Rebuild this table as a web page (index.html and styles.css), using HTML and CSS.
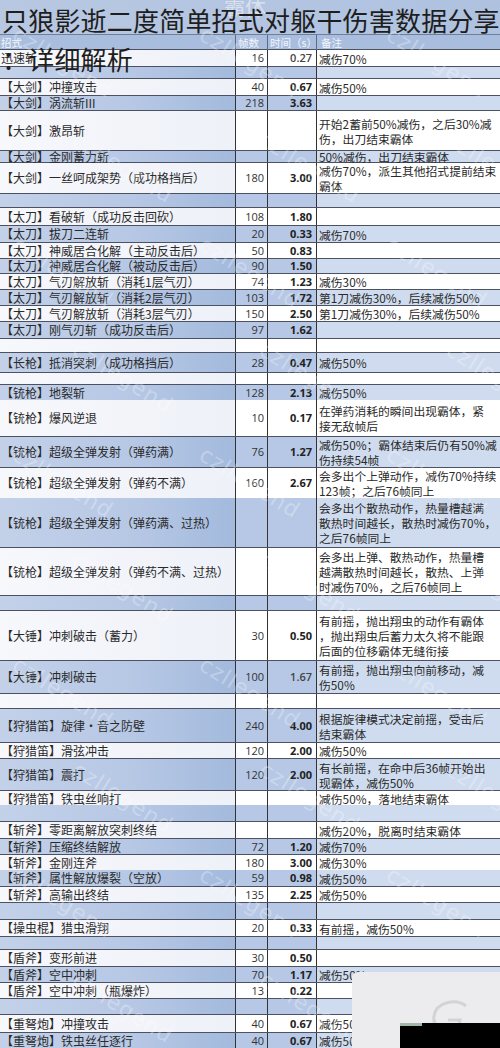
FILE: index.html
```html
<!DOCTYPE html>
<html lang="zh-CN">
<head>
<meta charset="utf-8">
<title>只狼影逝二度简单招式对躯干伤害数据分享：详细解析</title>
<link rel="stylesheet" href="styles.css">
</head>
<body>
<div class="page">
  <div class="sheet">
    <div class="row b h35 top"><div class="faint">霸体</div></div>
    <div class="row hdr h15"><div class="c1">招式</div><div class="c2">帧数</div><div class="c3">时间（s）</div><div class="c4">备注</div></div>
    <div class="row w h17"><div class="c1">迅速斩</div><div class="c2">16</div><div class="c3 thin">0.27</div><div class="c4">减伤70%</div></div>
    <div class="row b h12"><div class="c1"></div><div class="c2"></div><div class="c3"></div><div class="c4"></div></div>
    <div class="row w h17"><div class="c1">【大剑】冲撞攻击</div><div class="c2">40</div><div class="c3">0.67</div><div class="c4">减伤50%</div></div>
    <div class="row b h15"><div class="c1">【大剑】涡流斩III</div><div class="c2">218</div><div class="c3">3.63</div><div class="c4"></div></div>
    <div class="row w h40"><div class="c1">【大剑】激昂斩</div><div class="c2"></div><div class="c3"></div><div class="c4">开始2蓄前50%减伤，之后30%减<br>伤，出刀结束霸体</div></div>
    <div class="row b h12 tight"><div class="c1">【大剑】金刚蓄力斩</div><div class="c2"></div><div class="c3"></div><div class="c4">50%减伤，出刀结束霸体</div></div>
    <div class="row w h31"><div class="c1">【大剑】一丝呵成架势（成功格挡后）</div><div class="c2">180</div><div class="c3">3.00</div><div class="c4">减伤70%，派生其他招式提前结束<br>霸体</div></div>
    <div class="row b h14"><div class="c1"></div><div class="c2"></div><div class="c3"></div><div class="c4"></div></div>
    <div class="row w h18"><div class="c1">【太刀】看破斩（成功反击回砍）</div><div class="c2">108</div><div class="c3">1.80</div><div class="c4"></div></div>
    <div class="row b h17"><div class="c1">【太刀】拔刀二连斩</div><div class="c2">20</div><div class="c3">0.33</div><div class="c4">减伤70%</div></div>
    <div class="row w h16"><div class="c1">【太刀】神威居合化解（主动反击后）</div><div class="c2">50</div><div class="c3">0.83</div><div class="c4"></div></div>
    <div class="row b h15"><div class="c1">【太刀】神威居合化解（被动反击后）</div><div class="c2">90</div><div class="c3">1.50</div><div class="c4"></div></div>
    <div class="row w h16"><div class="c1">【太刀】气刃解放斩（消耗1层气刃）</div><div class="c2">74</div><div class="c3">1.23</div><div class="c4">减伤30%</div></div>
    <div class="row b h16"><div class="c1">【太刀】气刃解放斩（消耗2层气刃）</div><div class="c2">103</div><div class="c3">1.72</div><div class="c4">第1刀减伤30%，后续减伤50%</div></div>
    <div class="row w h16"><div class="c1">【太刀】气刃解放斩（消耗3层气刃）</div><div class="c2">150</div><div class="c3">2.50</div><div class="c4">第1刀减伤30%，后续减伤50%</div></div>
    <div class="row b h17"><div class="c1">【太刀】刚气刃斩（成功反击后）</div><div class="c2">97</div><div class="c3">1.62</div><div class="c4"></div></div>
    <div class="row w h14"><div class="c1"></div><div class="c2"></div><div class="c3"></div><div class="c4"></div></div>
    <div class="row b h20"><div class="c1">【长枪】抵消突刺（成功格挡后）</div><div class="c2">28</div><div class="c3">0.47</div><div class="c4">减伤50%</div></div>
    <div class="row w h12"><div class="c1"></div><div class="c2"></div><div class="c3"></div><div class="c4"></div></div>
    <div class="row b h15"><div class="c1">【铳枪】地裂斩</div><div class="c2">128</div><div class="c3">2.13</div><div class="c4">减伤50%</div></div>
    <div class="row w h37"><div class="c1">【铳枪】爆风逆退</div><div class="c2">10</div><div class="c3">0.17</div><div class="c4">在弹药消耗的瞬间出现霸体，紧<br>接无敌帧后</div></div>
    <div class="row b h31"><div class="c1">【铳枪】超级全弹发射（弹药满）</div><div class="c2">76</div><div class="c3">1.27</div><div class="c4">减伤50%；霸体结束后仍有50%减<br>伤持续54帧</div></div>
    <div class="row w h30"><div class="c1">【铳枪】超级全弹发射（弹药不满）</div><div class="c2">160</div><div class="c3">2.67</div><div class="c4">会多出个上弹动作，减伤70%持续<br>123帧；之后76帧同上</div></div>
    <div class="row b h50"><div class="c1">【铳枪】超级全弹发射（弹药满、过热）</div><div class="c2"></div><div class="c3"></div><div class="c4">会多出个散热动作，热量槽越满<br>散热时间越长，散热时减伤70%，<br>之后76帧同上</div></div>
    <div class="row w h48"><div class="c1">【铳枪】超级全弹发射（弹药不满、过热）</div><div class="c2"></div><div class="c3"></div><div class="c4">会多出上弹、散热动作，热量槽<br>越满散热时间越长，散热、上弹<br>时减伤70%，之后76帧同上</div></div>
    <div class="row b h15"><div class="c1"></div><div class="c2"></div><div class="c3"></div><div class="c4"></div></div>
    <div class="row w h50"><div class="c1">【大锤】冲刺破击（蓄力）</div><div class="c2">30</div><div class="c3">0.50</div><div class="c4">有前摇，抛出翔虫的动作有霸体<br>，抛出翔虫后蓄力太久将不能跟<br>后面的位移霸体无缝衔接</div></div>
    <div class="row b h33"><div class="c1">【大锤】冲刺破击</div><div class="c2">100</div><div class="c3 thin">1.67</div><div class="c4">有前摇，抛出翔虫向前移动，减<br>伤50%</div></div>
    <div class="row w h15"><div class="c1"></div><div class="c2"></div><div class="c3"></div><div class="c4"></div></div>
    <div class="row b h34"><div class="c1">【狩猎笛】旋律·音之防壁</div><div class="c2">240</div><div class="c3">4.00</div><div class="c4">根据旋律模式决定前摇，受击后<br>结束霸体</div></div>
    <div class="row w h16"><div class="c1">【狩猎笛】滑弦冲击</div><div class="c2">120</div><div class="c3">2.00</div><div class="c4">减伤50%</div></div>
    <div class="row b h32"><div class="c1">【狩猎笛】震打</div><div class="c2">120</div><div class="c3">2.00</div><div class="c4">有长前摇，在命中后36帧开始出<br>现霸体，减伤50%</div></div>
    <div class="row w h14"><div class="c1">【狩猎笛】铁虫丝响打</div><div class="c2"></div><div class="c3"></div><div class="c4">减伤50%，落地结束霸体</div></div>
    <div class="row b h17"><div class="c1"></div><div class="c2"></div><div class="c3"></div><div class="c4"></div></div>
    <div class="row w h17"><div class="c1">【斩斧】零距离解放突刺终结</div><div class="c2"></div><div class="c3"></div><div class="c4">减伤20%，脱离时结束霸体</div></div>
    <div class="row b h16"><div class="c1">【斩斧】压缩终结解放</div><div class="c2">72</div><div class="c3">1.20</div><div class="c4">减伤70%</div></div>
    <div class="row w h15"><div class="c1">【斩斧】金刚连斧</div><div class="c2">180</div><div class="c3">3.00</div><div class="c4">减伤30%</div></div>
    <div class="row b h17"><div class="c1">【斩斧】属性解放爆裂（空放）</div><div class="c2">59</div><div class="c3">0.98</div><div class="c4">减伤50%</div></div>
    <div class="row w h16"><div class="c1">【斩斧】高输出终结</div><div class="c2">135</div><div class="c3">2.25</div><div class="c4">减伤50%</div></div>
    <div class="row b h17"><div class="c1"></div><div class="c2"></div><div class="c3"></div><div class="c4"></div></div>
    <div class="row w h17"><div class="c1">【操虫棍】猎虫滑翔</div><div class="c2">20</div><div class="c3">0.33</div><div class="c4">有前摇，减伤50%</div></div>
    <div class="row b h13"><div class="c1"></div><div class="c2"></div><div class="c3"></div><div class="c4"></div></div>
    <div class="row w h17"><div class="c1">【盾斧】变形前进</div><div class="c2">30</div><div class="c3">0.50</div><div class="c4"></div></div>
    <div class="row b h16"><div class="c1">【盾斧】空中冲刺</div><div class="c2">70</div><div class="c3">1.17</div><div class="c4">减伤50%</div></div>
    <div class="row w h16"><div class="c1">【盾斧】空中冲刺（瓶爆炸）</div><div class="c2">13</div><div class="c3">0.22</div><div class="c4"></div></div>
    <div class="row b h16"><div class="c1"></div><div class="c2"></div><div class="c3"></div><div class="c4"></div></div>
    <div class="row w h18"><div class="c1">【重弩炮】冲撞攻击</div><div class="c2">40</div><div class="c3">0.67</div><div class="c4">减伤50%</div></div>
    <div class="row b h15"><div class="c1">【重弩炮】铁虫丝任逐行</div><div class="c2">40</div><div class="c3">0.67</div><div class="c4">减伤50%</div></div>
  </div>

  <div class="marks" aria-hidden="true">
    <span>czllegend</span><span>czllegend</span><span>czllegend</span>
    <span>czllegend</span><span>czllegend</span><span>czllegend</span>
    <span>czllegend</span><span>czllegend</span><span>czllegend</span>
    <span>czllegend</span><span>czllegend</span><span>czllegend</span>
    <span>czllegend</span><span>czllegend</span><span>czllegend</span>
    <span>czllegend</span><span>czllegend</span><span>czllegend</span>
    <span>czllegend</span><span>czllegend</span><span>czllegend</span>
    <span>czllegend</span><span>czllegend</span><span>czllegend</span>
    <span>czllegend</span><span>czllegend</span><span>czllegend</span>
    <span>czllegend</span><span>czllegend</span><span>czllegend</span>
  </div>

  <h1 class="title">只狼影逝二度简单招式对躯干伤害数据分享<br>：详细解析</h1>

  <div class="logo-box" aria-hidden="true">
    <svg class="swirl" width="50" height="40" viewBox="0 0 50 40">
      <path d="M40 8 C30 0 10 4 8 18 C6 30 20 36 32 30 L34 22 L22 22" fill="none" stroke="#d3d3d6" stroke-width="3"/>
    </svg>
    <div class="black"><div class="stripe"></div></div>
  </div>
</div>
</body>
</html>
```

FILE: styles.css
```css
* { box-sizing: border-box; }
html, body { margin: 0; padding: 0; background: #ffffff; }
body {
  font-family: "Noto Sans CJK SC", "Noto Sans", sans-serif;
  color: #2a2a2a;
}
.page {
  position: relative;
  width: 500px;
  height: 1048px;
  overflow: hidden;
}
.sheet {
  display: flex;
  flex-direction: column;
  width: 500px;
}
.row {
  display: grid;
  grid-template-columns: 236px 32px 49px 1fr;
  border-bottom: 1px solid #4c5262;
  font-size: 12px;
  line-height: 14px;
}
.row.tight { line-height: 11px; }
.row > div {
  display: flex;
  align-items: center;
  white-space: nowrap;
  overflow: visible;
  border-right: 1px solid #333;
  min-width: 0;
}
.row > div:last-child { border-right: none; }
.c1 { padding-left: 1px; }
.c2 {
  justify-content: flex-end;
  padding-right: 3px;
  font-family: "Open Sans", "Noto Sans", sans-serif;
  font-size: 11px;
  color: #333;
}
.c3 {
  justify-content: flex-end;
  padding-right: 4px;
  font-family: "Open Sans", "Noto Sans", sans-serif;
  font-size: 11px;
  font-weight: 700;
  color: #222;
}
.c3.thin { font-weight: 600; color: #444; }
.c4 {
  padding-left: 2px;
  line-height: 15px;
  font-size: 11.8px;
}
.row > .c4 { overflow-x: clip; overflow-y: visible; }
.tight .c4 { line-height: 11px; }
.w .c1 { background: linear-gradient(to right, #f7f8fc, #eef1f8); }
.w .c2, .w .c3, .w .c4 { background: #ffffff; }
.b .c1 { background: linear-gradient(to right, #c3d1e9 0%, #b7c8e5 55%, #a3badd 100%); }
.b .c2, .b .c3 { background: #b6c8e5; }
.b .c4 { background: #cfdcef; }

.top {
  display: block;
  background: linear-gradient(to right, #b8c8e2, #aec2e0);
  border-bottom: 1px solid #6f7f9a;
  overflow: hidden;
}
.faint {
  padding-left: 224px;
  margin-top: -6px;
  font-size: 21px;
  line-height: 24px;
  color: #d9e1ef;
  border: none !important;
}
.hdr { background: #a9bedf; }
.hdr > div {
  background: transparent;
  color: #f2f5fb;
  font-size: 10.5px;
  border-right: 1px solid #5d6b85;
}
.hdr .c2, .hdr .c3 { justify-content: flex-start; padding-left: 2px; padding-right: 0; font-family: "Noto Sans CJK SC", sans-serif; font-weight: 400; }
.hdr .c4 { padding-left: 4px; font-size: 10.5px; }

.h12 { height: 12px; }
.h13 { height: 13px; }
.h14 { height: 14px; }
.h15 { height: 15px; }
.h16 { height: 16px; }
.h17 { height: 17px; }
.h18 { height: 18px; }
.h20 { height: 20px; }
.h30 { height: 30px; }
.h31 { height: 31px; }
.h32 { height: 32px; }
.h33 { height: 33px; }
.h34 { height: 34px; }
.h35 { height: 35px; }
.h37 { height: 37px; }
.h40 { height: 40px; }
.h48 { height: 48px; }
.h50 { height: 50px; }

.marks {
  position: absolute;
  left: -30px;
  top: 10px;
  width: 560px;
  height: 1060px;
  display: grid;
  grid-template-columns: repeat(3, 1fr);
  grid-auto-rows: 105px;
  pointer-events: none;
}
.marks span {
  display: block;
  align-self: center;
  justify-self: center;
  transform: rotate(32deg);
  font-family: "DejaVu Sans", sans-serif;
  font-size: 22px;
  letter-spacing: 1px;
  color: rgba(255, 255, 255, 0.28);
}
.marks span:nth-child(6n+4),
.marks span:nth-child(6n+5),
.marks span:nth-child(6n+6) { transform: translateX(60px) rotate(32deg); }

.title {
  position: absolute;
  left: 2px;
  top: 0;
  margin: 0;
  font-family: "Noto Sans CJK SC", sans-serif;
  font-weight: 400;
  font-size: 26px;
  line-height: 39px;
  letter-spacing: 0.2px;
  color: #1e1e1e;
  white-space: nowrap;
}

.logo-box {
  position: absolute;
  left: 352px;
  top: 972px;
  right: 0;
  bottom: 0;
  background: #ececee;
  border-top-left-radius: 6px;
}
.swirl {
  position: absolute;
  left: 74px;
  top: 26px;
}
.black {
  position: absolute;
  left: 48px;
  top: 51px;
  right: 0;
  bottom: 0;
  background: #000;
}
.stripe {
  width: 22px;
  height: 3px;
  background: #9fb8a8;
}
```
